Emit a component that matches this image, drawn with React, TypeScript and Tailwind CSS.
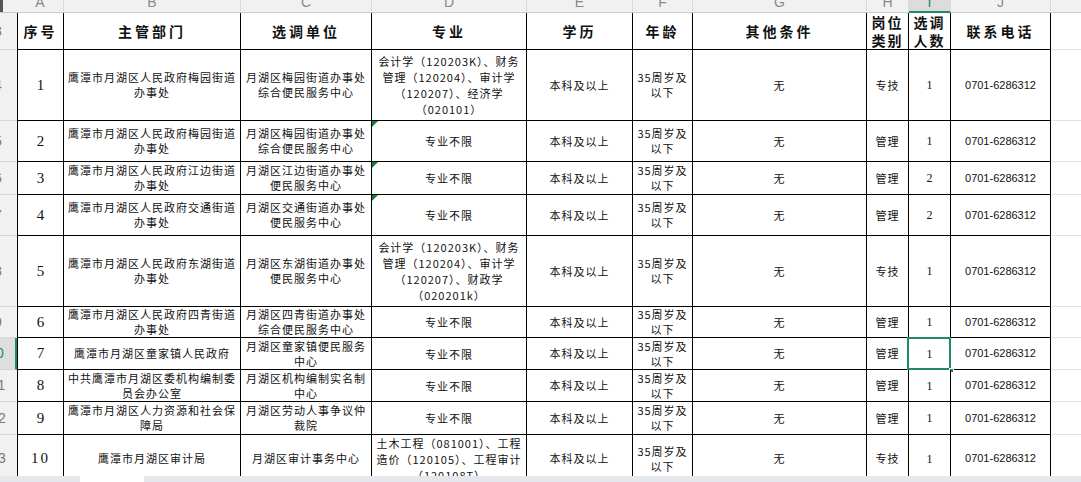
const cjk = "font-['Noto_Sans_CJK_SC','Noto_Sans',sans-serif]";

type Row = {
  dept: string[];
  unit: string[];
  major: string[];
  kind: string;
  count: string;
  tri?: boolean;
};

const rows: Row[] = [
  {
    dept: ["鹰潭市月湖区人民政府梅园街道", "办事处"],
    unit: ["月湖区梅园街道办事处", "综合便民服务中心"],
    major: ["会计学（120203K）、财务", "管理（120204）、审计学", "（120207）、经济学", "（020101）"],
    kind: "专技",
    count: "1",
  },
  {
    dept: ["鹰潭市月湖区人民政府梅园街道", "办事处"],
    unit: ["月湖区梅园街道办事处", "综合便民服务中心"],
    major: ["专业不限"],
    kind: "管理",
    count: "1",
    tri: true,
  },
  {
    dept: ["鹰潭市月湖区人民政府江边街道", "办事处"],
    unit: ["月湖区江边街道办事处", "便民服务中心"],
    major: ["专业不限"],
    kind: "管理",
    count: "2",
    tri: true,
  },
  {
    dept: ["鹰潭市月湖区人民政府交通街道", "办事处"],
    unit: ["月湖区交通街道办事处", "便民服务中心"],
    major: ["专业不限"],
    kind: "管理",
    count: "2",
    tri: true,
  },
  {
    dept: ["鹰潭市月湖区人民政府东湖街道", "办事处"],
    unit: ["月湖区东湖街道办事处", "便民服务中心"],
    major: ["会计学（120203K）、财务", "管理（120204）、审计学", "（120207）、财政学", "（020201k）"],
    kind: "专技",
    count: "1",
  },
  {
    dept: ["鹰潭市月湖区人民政府四青街道", "办事处"],
    unit: ["月湖区四青街道办事处", "综合便民服务中心"],
    major: ["专业不限"],
    kind: "管理",
    count: "1",
  },
  {
    dept: ["鹰潭市月湖区童家镇人民政府"],
    unit: ["月湖区童家镇便民服务", "中心"],
    major: ["专业不限"],
    kind: "管理",
    count: "1",
  },
  {
    dept: ["中共鹰潭市月湖区委机构编制委", "员会办公室"],
    unit: ["月湖区机构编制实名制", "中心"],
    major: ["专业不限"],
    kind: "管理",
    count: "1",
  },
  {
    dept: ["鹰潭市月湖区人力资源和社会保", "障局"],
    unit: ["月湖区劳动人事争议仲", "裁院"],
    major: ["专业不限"],
    kind: "管理",
    count: "1",
  },
  {
    dept: ["鹰潭市月湖区审计局"],
    unit: ["月湖区审计事务中心"],
    major: ["土木工程（081001）、工程", "造价（120105）、工程审计", "（120108T）"],
    kind: "专技",
    count: "1",
  },
];

const letters = ["A", "B", "C", "D", "E", "F", "G", "H", "I", "J", "K"];
const SELECTED = 6;

const cell =
  "border-r border-b border-black flex flex-col items-center justify-center text-center overflow-hidden text-[#111]";
const txt = `${cjk} text-[11px] tracking-[1px] leading-[15px]`;

const Lines = ({ lines }: { lines: string[] }) => (
  <>
    {lines.map((l, i) => (
      <div key={i} className="whitespace-nowrap">
        {l}
      </div>
    ))}
  </>
);

const RowHead = ({ n, active }: { n: number; active?: boolean }) => (
  <div
    className={`flex items-center justify-end overflow-hidden border-b border-[#d6d6d6] font-['Liberation_Sans',sans-serif] text-[14px] ${
      active ? "bg-[#dedede] border-r-2 border-r-[#1e8a66] text-[#1e8a66]" : "bg-[#f1f1f1] text-[#777]"
    }`}
  >
    <span className="w-[38px] shrink-0 text-center">{n}</span>
  </div>
);

export default function App() {
  return (
    <div className="w-[1081px] h-[482px] overflow-hidden bg-white flex flex-col">
      <div className="h-[476px] overflow-hidden">
        <div className="-mt-[7px] grid grid-cols-[17px_47px_177px_131px_155px_106px_60px_174px_42px_42px_100px_120px] grid-rows-[20px_37px_71px_41px_33px_41px_71px_31px_32px_32px_33px_48px]">
          {/* column letters */}
          <div className="bg-[#f1f1f1] border-b border-[#c9c9c9] flex items-end">
            <div className="w-[3px] h-[12px] bg-[#555]" />
          </div>
          {letters.map((l) => (
            <div
              key={l}
              className={`flex items-center justify-center font-['Liberation_Sans',sans-serif] text-[14px] border-r border-[#d9d9d9] ${
                l === "I"
                  ? "bg-[#dcdcdc] text-[#1e8a66] border-b-2 border-b-[#1e8a66]"
                  : "bg-[#f1f1f1] text-[#8a8a8a] border-b border-b-[#c9c9c9]"
              }`}
            >
              {l}
            </div>
          ))}

          {/* header row */}
          <RowHead n={3} />
          <div className={`${cell} border-l ${cjk} font-bold text-[14px] tracking-[3px]`}>序号</div>
          <div className={`${cell} ${cjk} font-bold text-[14px] tracking-[3px]`}>主管部门</div>
          <div className={`${cell} ${cjk} font-bold text-[14px] tracking-[3px]`}>选调单位</div>
          <div className={`${cell} ${cjk} font-bold text-[14px] tracking-[3px]`}>专业</div>
          <div className={`${cell} ${cjk} font-bold text-[14px] tracking-[3px]`}>学历</div>
          <div className={`${cell} ${cjk} font-bold text-[14px] tracking-[3px]`}>年龄</div>
          <div className={`${cell} ${cjk} font-bold text-[14px] tracking-[3px]`}>其他条件</div>
          <div className={`${cell} ${cjk} font-bold text-[14px] tracking-[2px] leading-[18px]`}>
            <div>岗位</div>
            <div>类别</div>
          </div>
          <div className={`${cell} ${cjk} font-bold text-[14px] tracking-[2px] leading-[18px]`}>
            <div>选调</div>
            <div>人数</div>
          </div>
          <div className={`${cell} ${cjk} font-bold text-[14px] tracking-[3px]`}>联系电话</div>
          <div className="border-b border-[#e2e2e2]" />

          {rows.map((r, i) => (
            <div key={i} className="contents">
              <RowHead n={i + 4} active={i === SELECTED} />
              <div
                className={`${cell} border-l font-['Liberation_Serif',serif] text-[15px] ${
                  i === 9 ? "tracking-[2px] text-[#2a3340]" : ""
                }`}
              >
                {i + 1}
              </div>
              <div className={`${cell} ${txt}`}>
                <Lines lines={r.dept} />
              </div>
              <div className={`${cell} ${txt}`}>
                <Lines lines={r.unit} />
              </div>
              <div className={`${cell} ${txt} leading-[16px] relative overflow-visible`}>
                {r.tri && (
                  <svg className="absolute left-0 top-0" width="6" height="6" viewBox="0 0 6 6">
                    <polygon points="0,0 6,0 0,6" fill="#1f7a32" />
                  </svg>
                )}
                <Lines lines={r.major} />
              </div>
              <div className={`${cell} ${txt}`}>本科及以上</div>
              <div className={`${cell} ${txt}`}>
                <div>35周岁及</div>
                <div>以下</div>
              </div>
              <div className={`${cell} ${txt}`}>无</div>
              <div className={`${cell} ${txt}`}>{r.kind}</div>
              <div className={`${cell} font-['Liberation_Serif',serif] text-[12px] relative overflow-visible`}>
                {r.count}
                {i === SELECTED && (
                  <>
                    <div className="absolute -left-[2px] -top-[1px] -right-[1px] -bottom-[1px] border-2 border-[#1e8a66]" />
                    <div className="absolute left-[40px] top-[30px] w-[5px] h-[5px] bg-[#1e8a66] border border-white" />
                  </>
                )}
              </div>
              <div className={`${cell} font-['Liberation_Sans',sans-serif] text-[11px]`}>0701-6286312</div>
              <div className="border-b border-[#e2e2e2]" />
            </div>
          ))}
        </div>
      </div>
      <div className="h-[6px] flex bg-[#e4e8ec]">
        <div className="w-[80px]" />
        <div className="w-[64px] bg-white" />
      </div>
    </div>
  );
}
